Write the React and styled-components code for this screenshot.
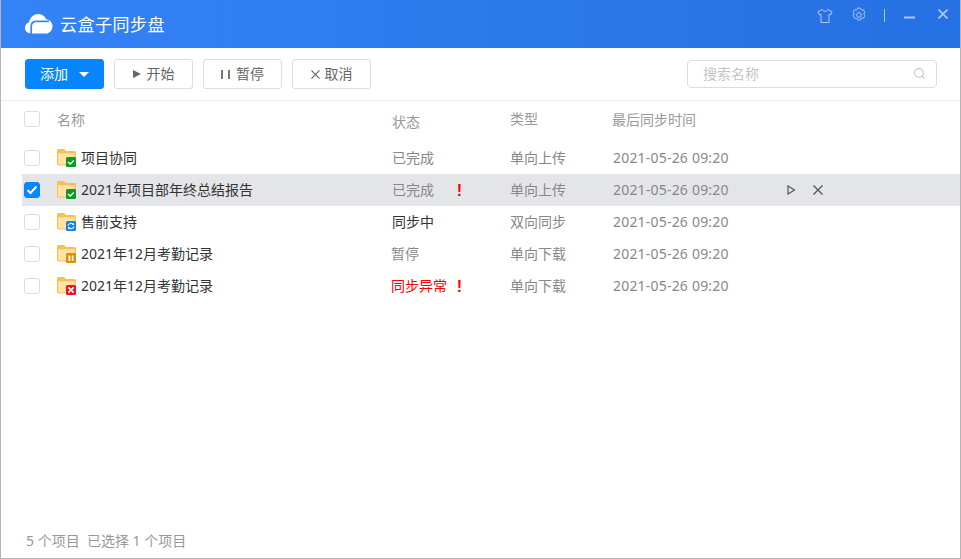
import React from 'react';
import styled, { createGlobalStyle } from 'styled-components';
import { Search } from 'lucide-react';

const GlobalStyle = createGlobalStyle`
  html, body {
    margin: 0;
    padding: 0;
    height: 100%;
    background: #fff;
  }
  #root {
    height: 100%;
  }
  * {
    box-sizing: border-box;
  }
`;

const COLUMNS = '33px 335px 118px 103px 172px 1fr';

const Wrapper = styled.div`
  height: 100vh;
  display: flex;
  flex-direction: column;
  border: 1px solid #b4b4b4;
  border-top: none;
  font-family: 'Noto Sans', 'Noto Sans CJK SC', sans-serif;
  font-size: 14px;
  color: #333;
`;

const TitleBar = styled.div`
  height: 48px;
  flex: none;
  display: flex;
  justify-content: space-between;
  background: linear-gradient(to right, #3483f7, #2570e2);
`;

const Brand = styled.div`
  display: flex;
  align-items: center;
  gap: 7px;
  padding-left: 24px;
  padding-top: 2px;
  height: 45px;
`;

const BrandName = styled.span`
  color: #fff;
  font-family: 'Noto Sans CJK SC', sans-serif;
  font-size: 17px;
  letter-spacing: 0.5px;
`;

const WindowControls = styled.div`
  display: flex;
  align-items: flex-start;
  padding: 7px 12px 0 0;
  color: #afc9f5;
`;

const ControlIcon = styled.svg`
  width: ${p => p.$size || 16}px;
  height: ${p => p.$size || 16}px;
  margin-right: ${p => p.$gap || 0}px;
  margin-top: ${p => p.$top || 0}px;
  fill: none;
  stroke: currentColor;
  stroke-width: 1;
  stroke-linejoin: round;
  flex: none;
`;

const Divider = styled.i`
  width: 1px;
  height: 13px;
  margin: 2px 19px 0 0;
  background: #a9c6f3;
`;

const Toolbar = styled.div`
  height: 53px;
  flex: none;
  display: flex;
  align-items: flex-start;
  padding: 11px 23px 0 24px;
  border-bottom: 1px solid #ececef;
`;

const ToolButton = styled.button`
  width: 79px;
  height: 30px;
  margin-right: 10px;
  padding: 0 0 2px;
  display: flex;
  align-items: center;
  justify-content: center;
  gap: ${p => p.$gap || 5}px;
  background: ${p => (p.$primary ? '#0785fd' : '#fff')};
  border: 1px solid ${p => (p.$primary ? '#0785fd' : '#dcdde3')};
  border-radius: 3px;
  color: ${p => (p.$primary ? '#fff' : '#666')};
  font-family: 'Noto Sans CJK SC', sans-serif;
  font-size: 14px;
`;

const Caret = styled.i`
  width: 0;
  height: 0;
  border-left: 5px solid transparent;
  border-right: 5px solid transparent;
  border-top: 5px solid #fff;
  margin: 2px 0 0 6px;
`;

const PlayGlyph = styled.i`
  width: 0;
  height: 0;
  margin-top: 2px;
  border-top: 4.5px solid transparent;
  border-bottom: 4.5px solid transparent;
  border-left: 8px solid #666;
  margin-right: 1px;
`;

const PauseGlyph = styled.i`
  width: 9px;
  height: 9px;
  margin: 2px 1px 0 0;
  border-left: 2px solid #777;
  border-right: 2px solid #777;
`;

const CrossIcon = styled.svg`
  width: ${p => p.$size}px;
  height: ${p => p.$size}px;
  margin-top: ${p => p.$top || 0}px;
  fill: none;
  stroke: ${p => p.$color};
  stroke-width: 1.3;
  flex: none;
`;

const SearchBox = styled.div`
  width: 250px;
  height: 28px;
  margin-top: 1px;
  margin-left: auto;
  display: flex;
  align-items: center;
  justify-content: space-between;
  padding: 0 10px 2px 15px;
  border: 1px solid #dcdde3;
  border-radius: 4px;
  color: #c4c4c4;
  font-family: 'Noto Sans CJK SC', sans-serif;
  font-size: 14px;
`;

const List = styled.div`
  flex: 1;
  padding-left: 21px;
`;

const HeadRow = styled.div`
  height: 41px;
  display: grid;
  grid-template-columns: ${COLUMNS};
  align-items: start;
  padding: 9px 0 0 2px;
  color: #999;
  font-family: 'Noto Sans CJK SC', sans-serif;
  font-size: 14px;
  line-height: 16px;
`;

const HeadCell = styled.div`
  padding-top: ${p => p.$top || 0}px;
  margin-left: ${p => p.$shift || 0}px;
`;

const Row = styled.div`
  height: 32px;
  display: grid;
  grid-template-columns: ${COLUMNS};
  align-items: center;
  padding-left: 2px;
  background: ${p => (p.$selected ? '#e4e5e9' : 'transparent')};
`;

const Check = styled.span`
  width: 16px;
  height: 16px;
  display: flex;
  align-items: center;
  justify-content: center;
  border-radius: 3px;
  border: 1px solid ${p => (p.$on ? '#0785fd' : '#dcdde3')};
  background: ${p => (p.$on ? '#0785fd' : '#fff')};
`;

const NameCell = styled.div`
  display: flex;
  align-items: center;
  gap: 5px;
  color: #333;
`;

const NameText = styled.span`
  padding-bottom: 2px;
`;

const StatusCell = styled.div`
  display: flex;
  align-items: center;
  padding-bottom: 2px;
  margin-left: ${p => p.$shift || 0}px;
  color: ${p => p.$color || '#888'};
  font-family: 'Noto Sans CJK SC', sans-serif;
  font-size: 14px;
`;

const Alert = styled.b`
  margin: 3px 48px 0 auto;
  color: #f00;
  font-family: 'Liberation Sans', sans-serif;
  font-size: 16px;
  font-weight: 700;
`;

const TypeCell = styled.div`
  padding-bottom: 2px;
  color: #888;
  font-family: 'Noto Sans CJK SC', sans-serif;
  font-size: 14px;
`;

const TimeCell = styled.div`
  padding-bottom: 2px;
  color: #888;
  letter-spacing: 0.2px;
`;

const RowActions = styled.div`
  display: flex;
  align-items: center;
  gap: 17px;
  padding-left: 2px;
`;

const Footer = styled.div`
  flex: none;
  height: 34px;
  padding: 0 0 0 25px;
  color: #999;
  font-size: 14px;
  line-height: 34px;
  white-space: pre;
`;

const Badge = ({ kind }) => {
  if (kind === 'done') {
    return (
      <>
        <rect x="9" y="8" width="10" height="10" rx="1.5" fill="#0a9a24" />
        <path d="M11 13l2.2 2 3.6-3.6" fill="none" stroke="#fff" strokeWidth="1.4" />
      </>
    );
  }
  if (kind === 'sync') {
    return (
      <>
        <rect x="9" y="8" width="10" height="10" rx="1.5" fill="#1583ee" />
        <path d="M11 12.6a3 3 0 0 1 5.2-1.2M17 13.4a3 3 0 0 1-5.2 1.2" fill="none" stroke="#fff" strokeWidth="1.1" />
        <path d="M17 9.8v2.2h-2.2zM11 16.2V14h2.2z" fill="#fff" />
      </>
    );
  }
  if (kind === 'pause') {
    return (
      <>
        <rect x="9" y="8" width="10" height="10" rx="1.5" fill="#e58a00" />
        <path d="M12.4 10.5v5.5M15.6 10.5v5.5" fill="none" stroke="#fff" strokeWidth="1.7" />
      </>
    );
  }
  return (
    <>
      <rect x="9" y="8" width="10" height="10" rx="1.5" fill="#ee1122" />
      <path d="M11.4 10.4l5.2 5.2M16.6 10.4l-5.2 5.2" fill="none" stroke="#fff" strokeWidth="1.6" />
    </>
  );
};

const FolderIcon = ({ kind }) => (
  <svg width="19" height="18" viewBox="0 0 19 18" style={{ flex: 'none' }}>
    <path d="M0 1.5C0 .7.7 0 1.5 0H7l2 2h8.5c.8 0 1.5.7 1.5 1.5V15c0 .8-.7 1.5-1.5 1.5h-16C.7 16.5 0 15.8 0 15z" fill="#fbbf4c" />
    <path d="M1 4.2h16.8V15a.6.6 0 0 1-.6.6H1.6A.6.6 0 0 1 1 15z" fill="#ffe2a6" />
    <Badge kind={kind} />
  </svg>
);

const rows = [
  { name: '项目协同', status: '已完成', type: '单向上传', kind: 'done' },
  { name: '2021年项目部年终总结报告', status: '已完成', type: '单向上传', kind: 'done', alert: true, selected: true },
  { name: '售前支持', status: '同步中', type: '双向同步', kind: 'sync', color: '#333' },
  { name: '2021年12月考勤记录', status: '暂停', type: '单向下载', kind: 'pause', shift: -1 },
  { name: '2021年12月考勤记录', status: '同步异常', type: '单向下载', kind: 'error', color: '#f00', alert: true, shift: -1 },
];

export default function App() {
  return (
    <Wrapper>
      <GlobalStyle />
      <TitleBar>
        <Brand>
          <svg width="28" height="20" viewBox="0 0 28 20">
            <path d="M6 19.5C2.5 19.5 0 17 0 13.8 0 11 1.8 9 4 8.3 5 3.3 9 0 13.2 0c3.6 0 6.6 2 8 5.2 3.4.2 6.3 3.2 6.3 7 0 4-3 7.3-6.5 7.3z" fill="#fff" />
            <path d="M6.2 20v-7.2c0-3.2 2-5.4 5-5.4H24" fill="none" stroke="#3483f7" strokeWidth="1.7" />
          </svg>
          <BrandName>云盒子同步盘</BrandName>
        </Brand>
        <WindowControls>
          <ControlIcon viewBox="0 0 16 16" $gap={18} $top={1}>
            <path d="M5.3 1.5L1 3.6l1.2 3.2 1.8-.5v8.2h8V6.3l1.8.5L15 3.6l-4.3-2.1c-.5 2.4-4.9 2.4-5.4 0z" />
          </ControlIcon>
          <ControlIcon viewBox="0 0 16 16" $gap={17}>
            <path d="M6.6 1.1h2.8l1 1.8 2-.1 1.4 2.4-1 1.8 1 1.8-1.4 2.4-2-.1-1 1.8H6.6l-1-1.8-2 .1-1.4-2.4 1-1.8-1-1.8 1.4-2.4 2 .1z" />
            <circle cx="8" cy="8" r="2.3" />
          </ControlIcon>
          <Divider />
          <ControlIcon viewBox="0 0 11 11" $size={11} $gap={23} $top={5}>
            <path d="M0 5.5h11" strokeWidth="2" />
          </ControlIcon>
          <ControlIcon viewBox="0 0 10 10" $size={10} $top={2}>
            <path d="M.5.5l9 9M9.5.5l-9 9" strokeWidth="1.6" />
          </ControlIcon>
        </WindowControls>
      </TitleBar>
      <Toolbar>
        <ToolButton $primary>添加 <Caret /></ToolButton>
        <ToolButton><PlayGlyph />开始</ToolButton>
        <ToolButton><PauseGlyph />暂停</ToolButton>
        <ToolButton>
          <CrossIcon viewBox="0 0 10 10" $size={9} $top={2} $color="#666">
            <path d="M.5.5l9 9M9.5.5l-9 9" />
          </CrossIcon>
          取消
        </ToolButton>
        <SearchBox>
          搜索名称
          <Search size={13} color="#c4c4c4" />
        </SearchBox>
      </Toolbar>
      <List>
        <HeadRow>
          <HeadCell $top={1}><Check /></HeadCell>
          <HeadCell $top={1}>名称</HeadCell>
          <HeadCell $top={3}>状态</HeadCell>
          <HeadCell>类型</HeadCell>
          <HeadCell $top={1} $shift={-1}>最后同步时间</HeadCell>
        </HeadRow>
        {rows.map((row, index) => (
          <Row key={index} $selected={row.selected}>
            <Check $on={row.selected}>
              {row.selected && (
                <svg width="12" height="10" viewBox="0 0 12 10">
                  <path d="M1.5 5l3 3 6-6.500" fill="none" stroke="#fff" strokeWidth="2" />
                </svg>
              )}
            </Check>
            <NameCell>
              <FolderIcon kind={row.kind} />
              <NameText>{row.name}</NameText>
            </NameCell>
            <StatusCell $color={row.color} $shift={row.shift}>
              {row.status}
              {row.alert && <Alert>!</Alert>}
            </StatusCell>
            <TypeCell>{row.type}</TypeCell>
            <TimeCell>2021-05-26 09:20</TimeCell>
            {row.selected && (
              <RowActions>
                <svg width="9" height="10" viewBox="0 0 9 10">
                  <path d="M1 1l6.500 4L1 9z" fill="none" stroke="#555" strokeWidth="1.2" />
                </svg>
                <CrossIcon viewBox="0 0 10 10" $size={10} $color="#555">
                  <path d="M.5.5l9 9M9.5.5l-9 9" />
                </CrossIcon>
              </RowActions>
            )}
          </Row>
        ))}
      </List>
      <Footer>5 个项目  已选择 1 个项目</Footer>
    </Wrapper>
  );
}
